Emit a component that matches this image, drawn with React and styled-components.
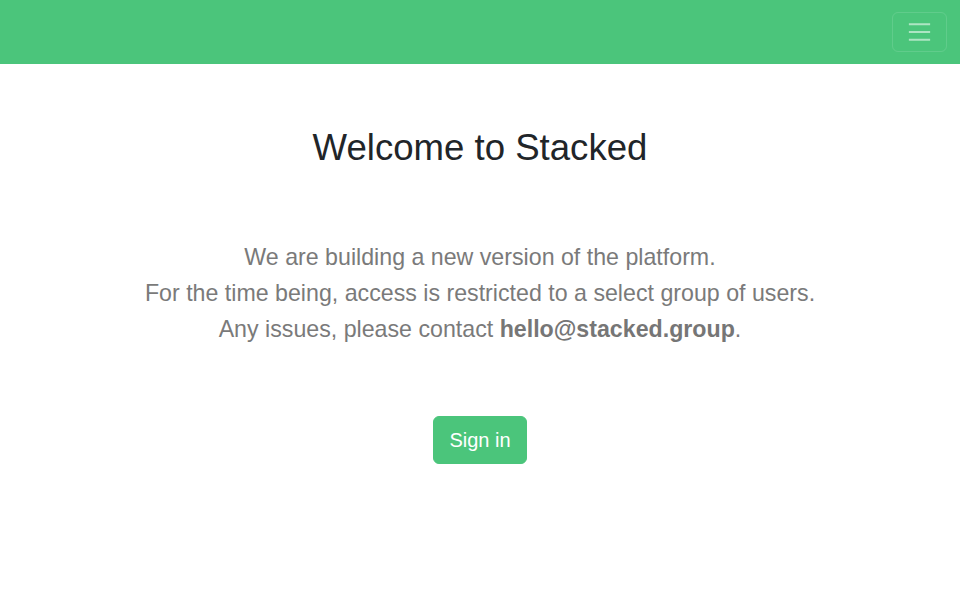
import styled, { createGlobalStyle } from 'styled-components';

const GlobalStyle = createGlobalStyle`
  html, body {
    margin: 0;
    padding: 0;
    background: #fff;
    font-family: "Liberation Sans", Arial, sans-serif;
    color: #212529;
  }
  * { box-sizing: border-box; }
`;

const Navbar = styled.nav`
  height: 64px;
  background: #4bc57b;
  display: flex;
  align-items: center;
  justify-content: flex-end;
  padding: 0 13px 0 12px;
`;

const Toggler = styled.button`
  width: 55px;
  height: 40px;
  padding: 4px 12px;
  background: transparent;
  border: 1px solid rgba(255, 255, 255, 0.12);
  border-radius: 6px;
  display: flex;
  align-items: center;
  justify-content: center;
  cursor: pointer;
`;

const Main = styled.main`
  display: flex;
  flex-direction: column;
  align-items: center;
  text-align: center;
  padding-top: 62px;
`;

const Title = styled.h1`
  margin: 0;
  font-size: 36.6px;
  line-height: 44px;
  font-weight: 400;
  color: #212529;
`;

const Lead = styled.p`
  margin: 69px 0 0;
  font-size: 23.2px;
  line-height: 36px;
  color: #7a7a7a;

  strong {
    font-weight: 700;
    color: #767676;
  }
`;

const SignIn = styled.button`
  margin-top: 69px;
  height: 48px;
  padding: 0 15.5px;
  font-family: inherit;
  font-size: 20px;
  color: #fff;
  background: #4bc57b;
  border: 1px solid #4bc57b;
  border-radius: 6px;
  cursor: pointer;
`;

const MenuIcon = () => (
  <svg width="30" height="30" viewBox="0 0 30 30" aria-hidden="true">
    <path
      d="M4 7h22M4 15h22M4 23h22"
      stroke="rgba(255,255,255,0.55)"
      strokeWidth="2"
      strokeLinecap="butt"
    />
  </svg>
);

const App = () => (
  <>
    <GlobalStyle />
    <Navbar>
      <Toggler aria-label="Toggle navigation">
        <MenuIcon />
      </Toggler>
    </Navbar>
    <Main>
      <Title>Welcome to Stacked</Title>
      <Lead>
        We are building a new version of the platform.
        <br />
        For the time being, access is restricted to a select group of users.
        <br />
        Any issues, please contact <strong>hello@stacked.group</strong>.
      </Lead>
      <SignIn>Sign in</SignIn>
    </Main>
  </>
);

export default App;
